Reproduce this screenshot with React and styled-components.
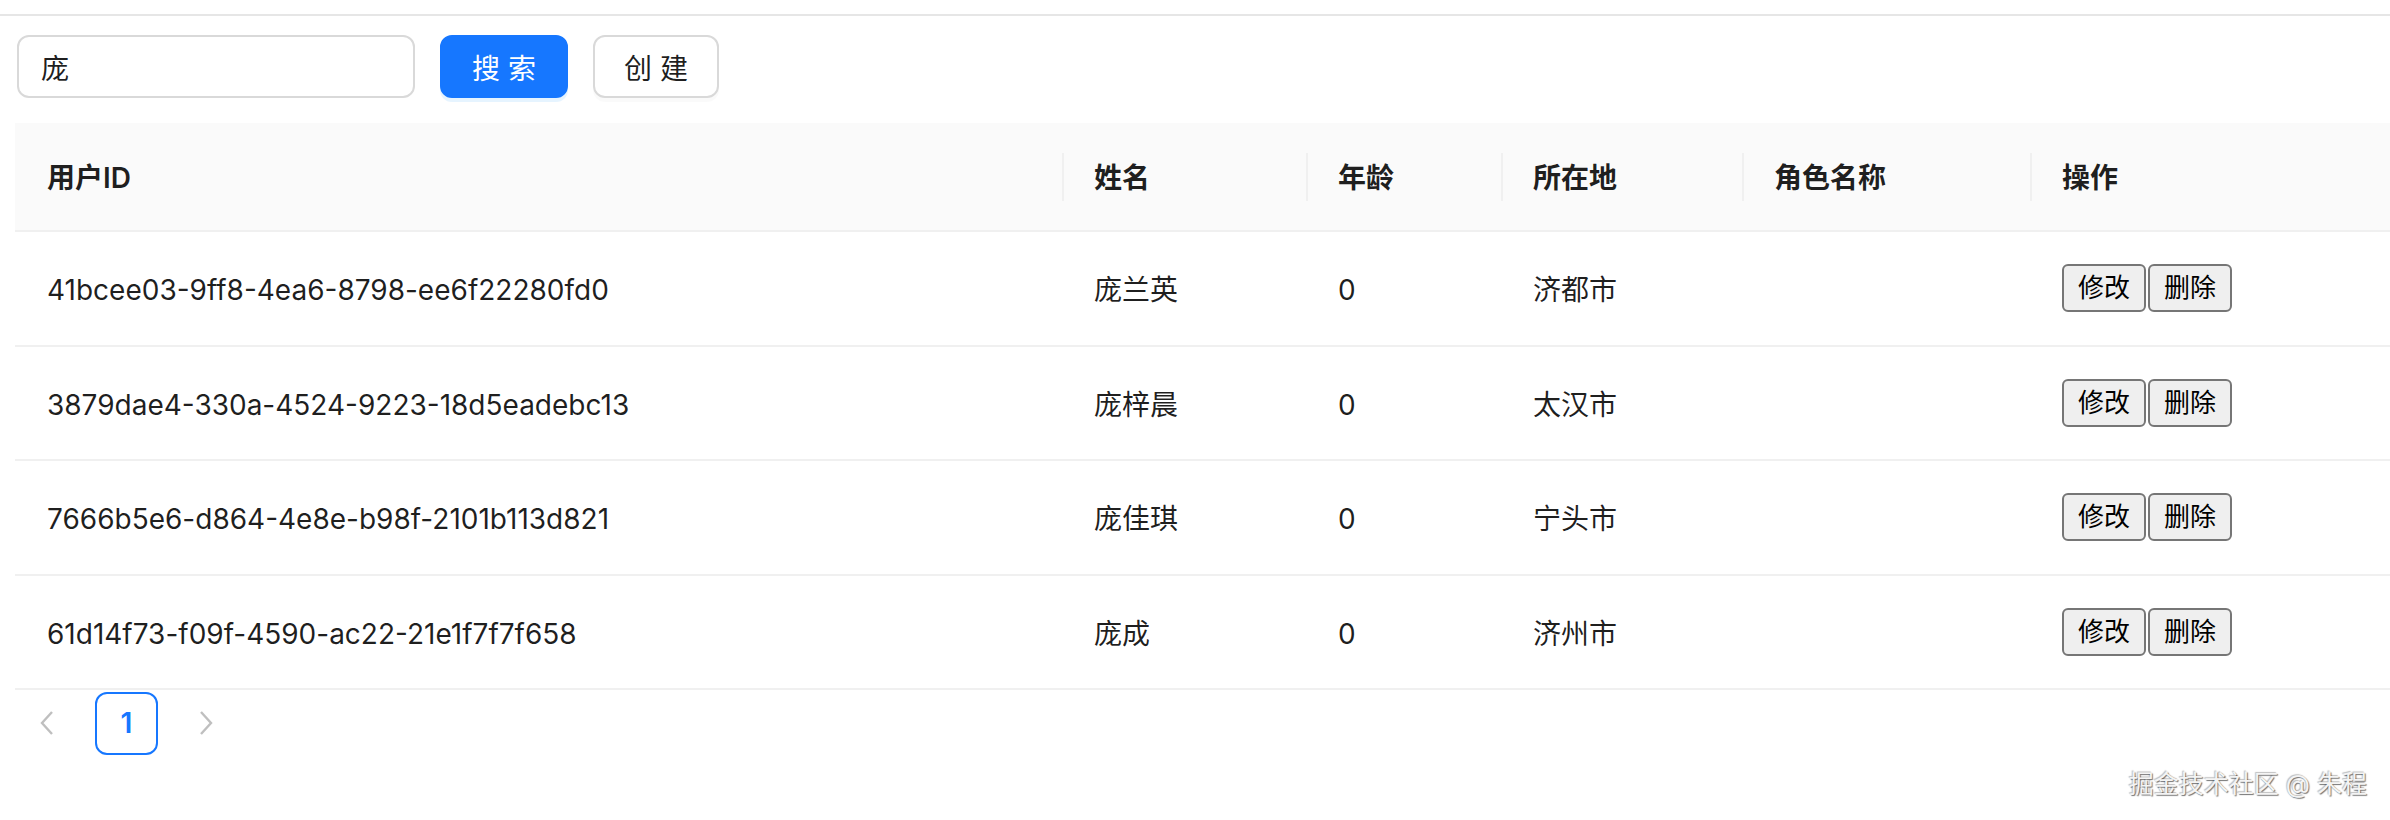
import styled, { createGlobalStyle } from 'styled-components';

const GlobalStyle = createGlobalStyle`
  body {
    margin: 0;
    background: #fff;
    font-family: Inter, "Noto Sans CJK SC", sans-serif;
    color: rgba(0, 0, 0, 0.88);
  }
`;

const cols = '1047px 244px 195px 241px 288px 1fr';

const users = [
  { id: '41bcee03-9ff8-4ea6-8798-ee6f22280fd0', name: '庞兰英', age: 0, city: '济都市' },
  { id: '3879dae4-330a-4524-9223-18d5eadebc13', name: '庞梓晨', age: 0, city: '太汉市' },
  { id: '7666b5e6-d864-4e8e-b98f-2101b113d821', name: '庞佳琪', age: 0, city: '宁头市' },
  { id: '61d14f73-f09f-4590-ac22-21e1f7f7f658', name: '庞成', age: 0, city: '济州市' },
];

const Page = styled.div`
  position: relative;
  height: 820px;
  overflow: hidden;
`;

const TopBar = styled.div`
  height: 14px;
  border-bottom: 2px solid #e6e6e6;
`;

const Content = styled.div`
  padding: 19px 0 0 15px;
`;

const Toolbar = styled.div`
  display: flex;
  gap: 25px;
  margin: 0 0 25px 2px;
`;

const SearchInput = styled.input`
  box-sizing: border-box;
  width: 398px;
  height: 63px;
  padding: 0 22px;
  border: 2px solid #d9d9d9;
  border-radius: 12px;
  font: inherit;
  font-size: 28px;
  color: rgba(0, 0, 0, 0.88);
  outline: none;
`;

const Button = styled.button`
  box-sizing: border-box;
  width: ${p => p.$w}px;
  height: 63px;
  border-radius: 12px;
  font: inherit;
  font-size: 28px;
  cursor: pointer;
  border: 2px solid ${p => (p.$primary ? '#1677ff' : '#d9d9d9')};
  background: ${p => (p.$primary ? '#1677ff' : '#fff')};
  color: ${p => (p.$primary ? '#fff' : 'rgba(0,0,0,0.88)')};
  box-shadow: 0 4px 0 ${p => (p.$primary ? 'rgba(5,145,255,0.1)' : 'rgba(0,0,0,0.02)')};
`;

const HeadRow = styled.div`
  display: grid;
  grid-template-columns: ${cols};
  align-items: center;
  box-sizing: border-box;
  height: 109px;
  background: #fafafa;
  border-bottom: 2px solid #f0f0f0;
`;

const HeadCell = styled.div`
  position: relative;
  padding: 2px 32px 0;
  font-size: 28px;
  line-height: 44px;
  font-weight: 600;

  &:not(:first-child)::before {
    content: '';
    position: absolute;
    left: 0;
    top: 50%;
    width: 2px;
    height: 48px;
    transform: translateY(-50%);
    background: #f0f0f0;
  }
`;

const Row = styled.div`
  display: grid;
  grid-template-columns: ${cols};
  align-items: center;
  box-sizing: border-box;
  height: 114.5px;
  border-bottom: 2px solid #f0f0f0;
`;

const Cell = styled.div`
  padding: 4px 32px 0;
  font-size: 28px;
  line-height: 44px;
`;

const Actions = styled.div`
  display: flex;
  gap: 2px;
  margin-top: -4px;
`;

const ActionButton = styled.button`
  box-sizing: border-box;
  width: 84px;
  height: 48px;
  padding: 0;
  border: 2px solid #767676;
  border-radius: 6px;
  background: #efefef;
  color: #000;
  font: inherit;
  font-size: 26px;
`;

const Pagination = styled.div`
  display: flex;
  align-items: center;
  height: 64px;
  margin-top: 1px;
`;

const Arrow = styled.div`
  width: 64px;
  height: 64px;
  display: flex;
  align-items: center;
  justify-content: center;
  color: rgba(0, 0, 0, 0.25);
`;

const PageItem = styled.div`
  box-sizing: border-box;
  width: 63px;
  height: 63px;
  margin: 0 16px;
  border: 2px solid #1677ff;
  border-radius: 12px;
  display: flex;
  align-items: center;
  justify-content: center;
  color: #1677ff;
  font-size: 28px;
  font-weight: 600;
`;

const Watermark = styled.div`
  position: absolute;
  right: 23px;
  bottom: 20px;
  font-size: 25px;
  color: #f4f4f4;
  text-shadow: 1px 1px 1px rgba(0, 0, 0, 0.55), -1px -1px 1px rgba(0, 0, 0, 0.25);
`;

const Chevron = ({ dir }) => (
  <svg width="16" height="26" viewBox="0 0 16 26" fill="none" stroke="currentColor" strokeWidth="2.4">
    {dir === 'left' ? <polyline points="13,2 3,13 13,24" /> : <polyline points="3,2 13,13 3,24" />}
  </svg>
);

export default function App() {
  return (
    <Page>
      <GlobalStyle />
      <TopBar />
      <Content>
        <Toolbar>
          <SearchInput defaultValue="庞" />
          <Button $primary $w={128}>搜 索</Button>
          <Button $w={126}>创 建</Button>
        </Toolbar>
        <HeadRow>
          <HeadCell>用户ID</HeadCell>
          <HeadCell>姓名</HeadCell>
          <HeadCell>年龄</HeadCell>
          <HeadCell>所在地</HeadCell>
          <HeadCell>角色名称</HeadCell>
          <HeadCell>操作</HeadCell>
        </HeadRow>
        {users.map(u => (
          <Row key={u.id}>
            <Cell>{u.id}</Cell>
            <Cell>{u.name}</Cell>
            <Cell>{u.age}</Cell>
            <Cell>{u.city}</Cell>
            <Cell />
            <Cell>
              <Actions>
                <ActionButton>修改</ActionButton>
                <ActionButton>删除</ActionButton>
              </Actions>
            </Cell>
          </Row>
        ))}
        <Pagination>
          <Arrow><Chevron dir="left" /></Arrow>
          <PageItem>1</PageItem>
          <Arrow><Chevron dir="right" /></Arrow>
        </Pagination>
      </Content>
      <Watermark>掘金技术社区 @ 朱程</Watermark>
    </Page>
  );
}
